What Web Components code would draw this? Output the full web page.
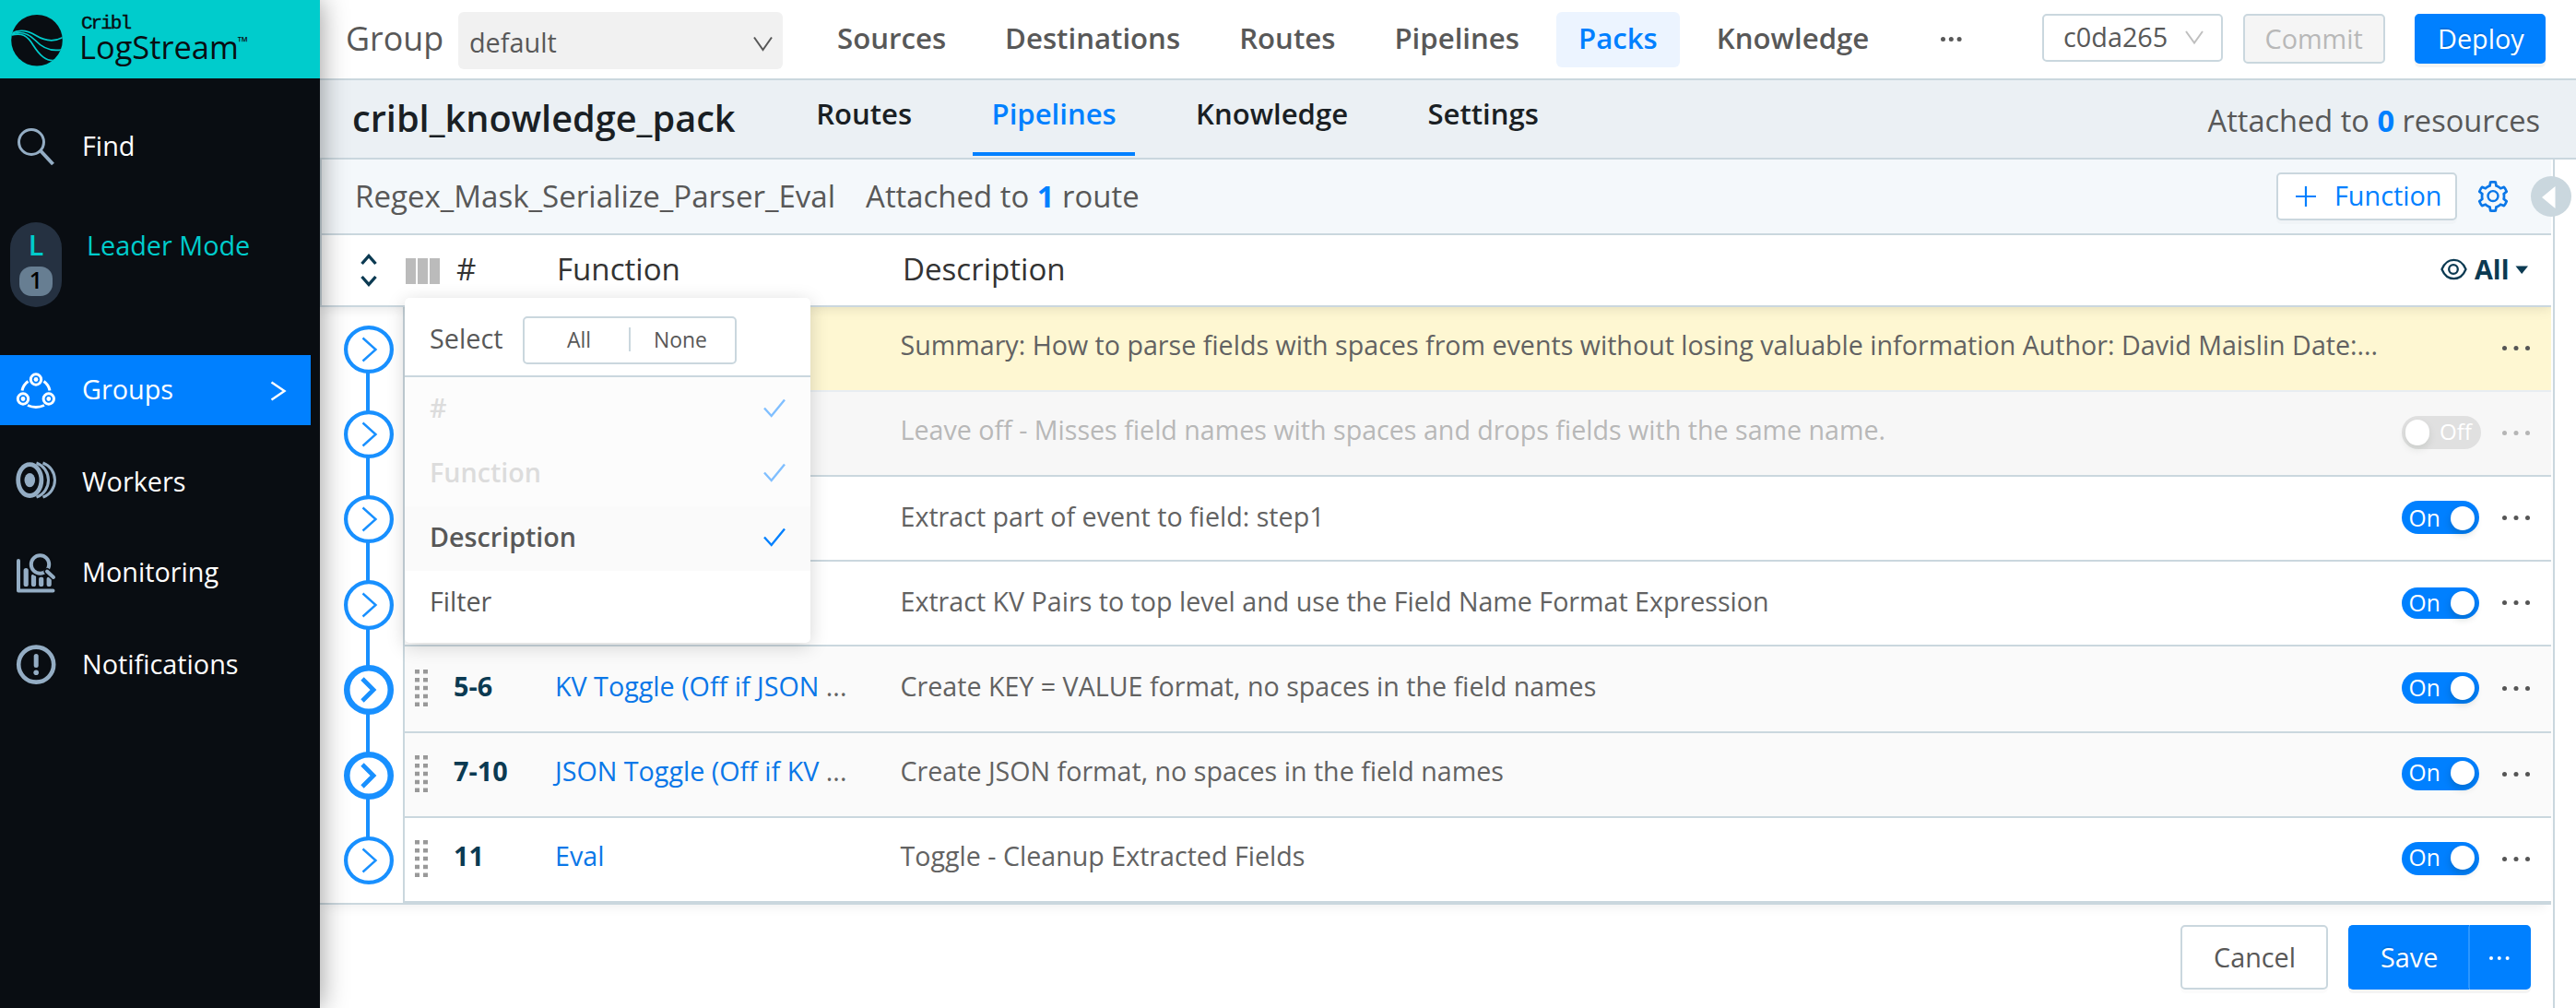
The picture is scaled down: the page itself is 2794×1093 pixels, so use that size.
<!DOCTYPE html>
<html lang="en">
<head>
<meta charset="utf-8">
<title>Cribl LogStream</title>
<style>
html,body{margin:0;padding:0;height:1093px;overflow:hidden;background:#fff}
body{font-family:"Open Sans","Noto Sans",sans-serif;color:#585858}
</style>
</head>
<body>
<log-app></log-app>
<script>
const define = (name, render) => customElements.define(name, class extends HTMLElement {
  connectedCallback() {
    if (this.shadowRoot) return;
    const root = this.attachShadow({ mode: 'open' });
    const tpl = document.createElement('template');
    tpl.innerHTML = '<style>*{box-sizing:border-box}svg{display:block;flex:none}</style>' + render(this).trim();
    root.append(tpl.content.cloneNode(true));
  }
});

/* One line of text; --s is the font size and --b the baseline below the row's top edge. */
define('ui-label', () => `<style>:host{display:block;flex:none;white-space:pre;line-height:40px;font-size:calc(var(--s,28.8)*1px);margin-top:calc(var(--b)*1px - 20px - .388em)}
::slotted(b){color:#0080ff;font-weight:700}</style><slot></slot>`);

define('ui-dots', e => {
  const gap = +e.getAttribute('gap') || 12.5, r = +e.getAttribute('r') || 2.5;
  const w = gap * 2 + r * 2;
  return `<style>:host{display:block;flex:none}</style>
<svg width="${w}" height="${r * 2}" fill="currentColor">${[0, 1, 2].map(i => `<circle cx="${r + i * gap}" cy="${r}" r="${r}"/>`).join('')}</svg>`;
});

define('ui-button', () => `
<style>:host{box-sizing:border-box;display:flex;flex:none;align-items:flex-start;border:2px solid #cad7de;border-radius:5px;background:#fff;box-shadow:0 4px 0 rgba(0,0,0,.016)}
:host([primary]){background:#0080ff;border-color:#0080ff;color:#fff;box-shadow:0 4px 0 rgba(0,0,0,.045);text-shadow:0 -2px 0 rgba(0,0,0,.12)}
:host([disabled]){background:#f5f5f5;color:#b8b8b8;box-shadow:none}
:host([plain]){box-shadow:none}</style><slot></slot>`);

define('nav-item', () => `
<style>:host{display:flex;flex:none;width:337px;height:76px;color:#fff}
:host([active]){background:#0080ff}
.icon{width:89px;flex:none}</style><div class="icon"><slot name="icon"></slot></div><slot></slot><slot name="end"></slot>`);

define('side-bar', () => `
<style>
:host{display:flex;flex-direction:column;width:347px;flex:none;height:1093px;background:#090d12;box-shadow:0 0 28px rgba(0,0,0,.42);position:relative;z-index:5}
.logo{height:85px;background:#00cccc;display:flex;color:#090d12;padding-left:12px;flex:none}
.words{padding-left:9px;display:flex;flex-direction:column}
.cribl{font:400 21px/20px "Liberation Mono",monospace;letter-spacing:-2px;-webkit-text-stroke:.4px #090d12;padding:16px 0 0 10px;height:34px}
.name{display:flex}
.leader{display:flex;height:93px;margin-top:45px;padding-left:11px;color:#00cccc}
.pill{width:56px;height:92px;border-radius:28px;background:#253141;display:flex;flex-direction:column;align-items:center}
.num{width:36px;height:32px;border-radius:13px;background:#677e92;color:#000;display:flex;justify-content:center;margin-top:auto;margin-bottom:12px}
</style>
<div class="logo">
 <svg width="57" height="85" viewBox="12 0 57 85"><clipPath id="c"><circle cx="40" cy="43.7" r="27.8"/></clipPath><circle cx="40" cy="43.7" r="27.8" fill="#090d12"/>
 <g clip-path="url(#c)" fill="none" stroke="#00cccc" stroke-width="1.7"><path d="M11 37C20 31.5 30 33 39 38.5C48 44 58 47 70 39.5"/><path d="M11 37.8C22 33 30 35.5 38 43.5C47 53 56 56.5 68 53.5"/><path d="M11 38.5C24 34.5 30 39 36 49C43 60 50 67 60 65.5"/></g></svg>
 <div class="words"><div class="cribl">Cribl</div>
 <div class="name"><ui-label style="--s:34.4;--b:30;margin-left:8px">LogStream</ui-label><ui-label style="--s:15;--b:17;font-weight:600;margin-left:-1px">™</ui-label></div></div>
</div>
<nav-item style="margin-top:35px"><svg slot="icon" width="80" height="76" viewBox="0 120 80 76" fill="none" stroke="#94adc4" stroke-width="3"><circle cx="34" cy="154" r="13.5"/><path d="M44 163.5L57.5 178" stroke-width="4"/></svg><ui-label style="--b:49">Find</ui-label></nav-item>
<div class="leader"><div class="pill"><ui-label style="--s:30.5;--b:36;font-weight:600">L</ui-label><div class="num"><ui-label style="--s:25;--b:24;font-weight:600">1</ui-label></div></div><ui-label style="--b:36;margin-left:27px">Leader Mode</ui-label></div>
<nav-item active style="margin-top:51px"><svg slot="icon" width="80" height="76" viewBox="0 385 80 76" fill="none" stroke="#fff" stroke-width="3"><g><circle cx="39" cy="411.5" r="5.7"/><circle cx="25" cy="432.5" r="5.7"/><circle cx="52.8" cy="432.5" r="5.7"/><path d="M24 423.5A16 16 0 0 1 30.5 413.5M47.5 413.5A16 16 0 0 1 54 423.5M30 439.5Q39 443.5 48 439.5"/></g><g fill="#fff" stroke="none"><circle cx="39" cy="411.5" r="2.4"/><circle cx="25" cy="432.5" r="2.4"/><circle cx="52.8" cy="432.5" r="2.4"/></g></svg><ui-label style="--b:48;width:204px">Groups</ui-label><svg slot="end" width="20" height="76" viewBox="293 385 20 76" fill="none" stroke="#fff" stroke-width="2.4"><path d="M294.5 414.5L308.5 424L294.5 433.5"/></svg></nav-item>
<nav-item style="margin-top:23px"><svg slot="icon" width="80" height="76" viewBox="0 484 80 76" fill="none" stroke="#94adc4"><ellipse cx="32.3" cy="520.6" rx="12.6" ry="16.9" stroke-width="4.8"/><ellipse cx="32.3" cy="520.6" rx="5.8" ry="7.7" fill="#94adc4" stroke="none"/><path d="M39.5 502C48 505 52.5 513 52.5 520.6S48 536 39.5 539.2M46.5 502C55 505 59.5 513 59.5 520.6S55 536 46.5 539.2" stroke-width="3"/></svg><ui-label style="--b:49">Workers</ui-label></nav-item>
<nav-item style="margin-top:23px"><svg slot="icon" width="80" height="76" viewBox="0 583 80 76" fill="none" stroke="#94adc4" stroke-width="4" stroke-linecap="round" stroke-linejoin="round"><path d="M20 608V640.5H57.5"/><path d="M28.2 618.5V633.5M36.5 625V633.5M44.7 628V633.5M53.2 628V633.5" stroke-width="5.2"/><circle cx="43.5" cy="612" r="13.5" fill="#090d12" stroke="none"/><circle cx="43.5" cy="612" r="9.7" fill="#090d12"/><path d="M51 619.5L58 626" stroke="#090d12" stroke-width="7"/><path d="M51 619.5L58 626"/></svg><ui-label style="--b:48">Monitoring</ui-label></nav-item>
<nav-item style="margin-top:22px"><svg slot="icon" width="80" height="76" viewBox="0 681 80 76" fill="none" stroke="#94adc4" stroke-width="4.6"><circle cx="39.2" cy="720.6" r="19"/><path d="M39.2 711.5V721.5" stroke-width="5" stroke-linecap="round"/><circle cx="39.2" cy="729.2" r="2.8" fill="#94adc4" stroke="none"/></svg><ui-label style="--b:50">Notifications</ui-label></nav-item>`);

define('nav-tab', () => `
<style>:host{display:flex;height:60px;padding:0 24px;border-radius:6px;font-weight:600;--s:31.2;--b:40}
:host([active]){background:#ecf4ff;color:#0080ff}</style><ui-label><slot></slot></ui-label>`);

define('top-bar', () => `
<style>:host{display:flex;align-items:flex-start;height:87px;flex:none;border-bottom:2px solid #cad7de;background:#fff;padding:0 33px 0 28px}
.sel{width:352px;height:62px;margin-top:13px;border-radius:6px;background:#f1f1f1;display:flex;justify-content:space-between;padding:0 11px}
nav{display:flex;gap:16px;margin:13px 0 0 35px}</style>
<ui-label style="--s:35.8;--b:55;width:122px">Group</ui-label>
<div class="sel"><ui-label style="--b:44;padding-left:1px">default</ui-label><svg width="21" height="62" viewBox="817.5 13 21 62" fill="none" stroke="#585858" stroke-width="2"><path d="M818.5 40.5L828 54L837.5 40.5"/></svg></div>
<nav><nav-tab>Sources</nav-tab><nav-tab>Destinations</nav-tab><nav-tab>Routes</nav-tab><nav-tab>Pipelines</nav-tab><nav-tab active>Packs</nav-tab><nav-tab>Knowledge</nav-tab></nav>
<ui-dots gap="8.8" r="2.5" style="margin:39.5px 87px 0 auto"></ui-dots>
<ui-button plain style="width:196px;height:52px;margin-top:15px"><ui-label style="--b:34;margin-left:21px;width:132px">c0da265</ui-label><svg width="21" height="48" viewBox="2370 17 21 48" fill="none" stroke="#bfbfbf" stroke-width="2"><path d="M2371 34L2380 46.5L2389 34"/></svg></ui-button>
<ui-button disabled style="width:154px;height:54px;margin:15px 0 0 22px"><ui-label style="--b:36;margin-left:21.5px">Commit</ui-label></ui-button>
<ui-button primary style="width:142px;height:54px;margin:15px 0 0 32px"><ui-label style="--b:36;margin-left:23px">Deploy</ui-label></ui-button>`);

define('pack-tab', () => `
<style>:host{display:flex;height:82px;padding:0 20.7px;font-weight:600;color:#1a1f24;--s:31.1;--b:48}
:host([active]){color:#0080ff;border-bottom:4px solid #0080ff}</style><ui-label><slot></slot></ui-label>`);

define('pack-bar', () => `
<style>:host{display:flex;align-items:flex-start;height:86px;flex:none;border-bottom:2px solid #cad7de;background:#ebf0f4;padding:0 39px 0 35px}
nav{display:flex;gap:45px}</style>
<ui-label style="--s:39.7;--b:56;width:482.5px;font-weight:600;color:#1a1f24">cribl_knowledge_pack</ui-label>
<nav><pack-tab>Routes</pack-tab><pack-tab active>Pipelines</pack-tab><pack-tab>Knowledge</pack-tab><pack-tab>Settings</pack-tab></nav>
<ui-label style="--s:32.6;--b:56.6;margin-left:auto">Attached to <b>0</b> resources</ui-label>`);

define('pipeline-bar', () => `
<style>:host{box-sizing:border-box;display:flex;align-items:flex-start;height:82px;flex:none;border-bottom:2px solid #cad7de;border-left:2px solid #cad7de;background:#f4f8fb;padding:0 47px 0 36px;color:#585858}
.fn{color:#0080ff}</style>
<ui-label style="--s:33.1;--b:52.6">Regex_Mask_Serialize_Parser_Eval</ui-label>
<ui-label style="--s:32.9;--b:52.6;margin-left:33px">Attached to <b>1</b> route</ui-label>
<ui-button class="fn" style="width:196px;height:52px;margin:14px 22px 0 auto"><svg width="61" height="48" viewBox="2471 189 61 48" stroke="#0080ff" stroke-width="2.2"><path d="M2490 213H2512M2501 202V224"/></svg><ui-label style="--b:34">Function</ui-label></ui-button>
<svg width="34" height="34" viewBox="64 64 896 896" fill="#0a77e8" style="margin:23px -1px 0 0"><path d="M924.8 625.7l-65.5-56c3.1-19 4.7-38.4 4.7-57.8s-1.6-38.8-4.7-57.8l65.5-56a32.03 32.03 0 0 0 9.3-35.2l-.9-2.6a443.74 443.74 0 0 0-79.7-137.9l-1.8-2.1a32.12 32.12 0 0 0-35.1-9.5l-81.3 28.9c-30-24.6-63.5-44-99.7-57.6l-15.7-85a32.05 32.05 0 0 0-25.8-25.7l-2.7-.5c-52.1-9.4-106.9-9.4-159 0l-2.7.5a32.05 32.05 0 0 0-25.8 25.7l-15.8 85.4a351.86 351.86 0 0 0-99 57.4l-81.9-29.1a32 32 0 0 0-35.1 9.5l-1.8 2.1a446.02 446.02 0 0 0-79.7 137.9l-.9 2.6c-4.5 12.5-.8 26.5 9.3 35.2l66.3 56.6c-3.1 18.8-4.6 38-4.6 57.1 0 19.2 1.5 38.4 4.6 57.1L99 625.5a32.03 32.03 0 0 0-9.3 35.2l.9 2.6c18.1 50.4 44.9 96.9 79.7 137.9l1.8 2.1a32.12 32.12 0 0 0 35.1 9.5l81.9-29.1c29.8 24.5 63.1 43.9 99 57.4l15.8 85.4a32.05 32.05 0 0 0 25.8 25.7l2.7.5a449.4 449.4 0 0 0 159 0l2.7-.5a32.05 32.05 0 0 0 25.8-25.7l15.7-85a350 350 0 0 0 99.7-57.6l81.3 28.9a32 32 0 0 0 35.1-9.5l1.8-2.1c34.8-41.1 61.6-87.5 79.7-137.9l.9-2.6c4.5-12.3.8-26.3-9.3-35zM788.3 465.9c2.5 15.1 3.8 30.6 3.8 46.1s-1.3 31-3.8 46.1l-6.6 40.1 74.7 63.9a370.03 370.03 0 0 1-42.6 73.6L721 702.8l-31.4 25.8c-23.9 19.6-50.5 35-79.3 45.8l-38.1 14.3-17.9 97a377.5 377.5 0 0 1-85 0l-17.9-97.2-37.8-14.5c-28.5-10.8-55-26.2-78.7-45.7l-31.4-25.9-93.4 33.2c-17-22.9-31.2-47.6-42.6-73.6l75.5-64.5-6.5-40c-2.4-14.9-3.7-30.3-3.7-45.5 0-15.3 1.2-30.6 3.7-45.5l6.5-40-75.5-64.5c11.3-26.1 25.6-50.7 42.6-73.6l93.4 33.2 31.4-25.9c23.7-19.5 50.2-34.9 78.7-45.7l37.9-14.3 17.9-97.2c28.1-3.2 56.8-3.2 85 0l17.9 97 38.1 14.3c28.7 10.8 55.4 26.2 79.3 45.8l31.4 25.8 92.8-32.9c17 22.9 31.2 47.6 42.6 73.6L781.8 426l6.5 39.9zM512 326c-97.2 0-176 78.8-176 176s78.8 176 176 176 176-78.8 176-176-78.8-176-176-176zm79.2 255.2A111.6 111.6 0 0 1 512 614c-29.9 0-58-11.7-79.2-32.8A111.6 111.6 0 0 1 400 502c0-29.9 11.7-58 32.8-79.2C454 401.6 482.1 390 512 390c29.9 0 58 11.6 79.2 32.8A111.6 111.6 0 0 1 624 502c0 29.9-11.7 58-32.8 79.2z"/></svg>`);

define('table-head', () => `
<style>:host{box-sizing:border-box;display:flex;align-items:flex-start;height:78px;flex:none;border-bottom:2px solid #cad7de;border-left:2px solid #cad7de;box-shadow:0 0 14px rgba(0,0,0,.13);position:relative;z-index:1;clip-path:inset(0 0 -20px 0);padding-right:24px;color:#333}
.all{color:#0b3a52;font-weight:700;margin-left:auto;display:flex}
ui-label{--s:33.1;--b:50.2}</style>
<svg width="91" height="76" viewBox="349 255 91 76" fill="none" stroke="#0b3a52" stroke-width="3.4"><path d="M392.5 286L400 277.5L407.5 286M392.5 300L400 308.5L407.5 300"/></svg>
<svg width="55" height="76" viewBox="440 255 55 76" fill="#bbb"><path d="M440 280h11v28h-11zM453 280h11v28h-11zM466 280h11v28h-11z"/></svg>
<ui-label style="width:109px">#</ui-label><ui-label style="width:375px">Function</ui-label><ui-label>Description</ui-label>
<div class="all"><svg width="37" height="76" viewBox="2647 255 37 76" fill="none" stroke="#0b3a52" stroke-width="2.3"><path d="M2648.5 292C2654 278.5 2669 278.5 2674.5 292C2669 305.5 2654 305.5 2648.5 292Z"/><circle cx="2661" cy="292" r="4.8"/></svg><ui-label style="--s:28.8;--b:48;width:44px">All</ui-label><svg width="15" height="76" viewBox="2728 255 15 76" fill="#0b3a52"><path d="M2728.5 288.5H2742L2735.2 297Z"/></svg></div>`);

define('toggle-switch', e => {
  const off = e.hasAttribute('off');
  return `<style>:host{display:flex;flex:none;align-items:flex-start;width:${off ? 86 : 84}px;height:calc(var(--th,36)*1px);border-radius:18px;background:${off ? '#e0e0e0' : '#0080ff'};color:#fff;--s:24.6}
i{display:block;width:26px;height:${off ? 28 : 26}px;border-radius:14px;background:#fff;box-shadow:0 4px 8px rgba(0,35,11,${off ? .1 : .2});margin-top:calc(var(--k,4)*1px)}</style>` +
  (off ? `<i style="margin-left:4px"></i><ui-label style="--s:24.1;margin-left:11px;--b:26.2">Off</ui-label>`
       : `<ui-label style="margin-left:7.5px;width:45.5px;--b:calc(var(--tb) + .6)">On</ui-label><i></i>`);
});

/* A pipeline step: rail node, drag handle, number, function link, description, switch, menu. */
define('step-row', e => {
  const a = n => e.getAttribute(n), kind = a('kind') || '', h = +a('h') || 92, cy = +a('cy') || 46, b = a('b') || 52;
  const group = kind === 'group', ry = +a('ry') || 26, tt = +a('tt') || 26;
  const sw = group ? 6.5 : 4.2;
  return `<style>
:host{display:flex;height:${h}px;flex:none}
.rail{width:90px;flex:none}
.cells{flex:1;display:flex;align-items:flex-start;border-left:2px solid #cad7de;min-width:0}
.body{flex:1;display:flex;align-items:flex-start;height:${h}px;border-bottom:2px solid ${kind === 'comment' ? '#e8edf2' : '#cad7de'};background:${{ comment: '#fef7d2', off: '#f7f7f7', group: '#fafafa' }[kind] || '#fff'};color:${kind === 'off' ? '#b8b8b8' : '#626262'};padding-right:23px}
.num{color:#0b3a52;font-weight:700}
.fn{width:374.5px;flex:none}
.fn span{color:#0a77e8}
.end{margin-left:auto;display:flex;align-items:flex-start}
</style>
<svg class="rail" width="90" height="${h}" fill="none" stroke="#1890ff">
${e.hasAttribute('first') ? '' : `<path d="M52 0V${cy - ry + 1}" stroke-width="4"/>`}${e.hasAttribute('last') ? '' : `<path d="M52 ${cy + ry - 1}V${h}" stroke-width="4"/>`}
<ellipse cx="53" cy="${cy}" rx="${27 - sw / 2}" ry="${ry - sw / 2}" stroke-width="${sw}"/>
<path d="${group ? `M46 ${cy - 12}L58 ${cy}L46 ${cy + 12}` : `M46.5 ${cy - 12.5}L60.5 ${cy}L46.5 ${cy + 12.5}`}" stroke-width="${group ? 4.8 : 2.4}"/></svg>
<div class="cells"><div class="body">
<svg width="53" height="${h - 2}" fill="#999">${a('n') ? [0, 1, 2, 3, 4].map(i => `<path d="M11 ${cy - 22 + i * 8.9}h5v4.5h-5zM20 ${cy - 22 + i * 8.9}h5v4.5h-5z"/>`).join('') : ''}</svg>
<ui-label class="num" style="--b:${b};width:110px">${a('n') || ''}</ui-label>
<ui-label class="fn" style="--b:${b};--s:28.7"><span>${a('fn') || ''}</span>${a('cut') || ''}</ui-label>
<ui-label style="--b:${b};--s:28.63"><slot></slot></ui-label>
<div class="end">${kind === 'comment' ? '' : `<toggle-switch ${kind === 'off' ? 'off' : ''} style="margin-top:${tt}px;margin-right:${kind === 'off' ? 23 : 25}px;--tb:${b - tt};--th:${a('th') || 36};--k:${a('k') || 4}"></toggle-switch>`}
<ui-dots style="margin-top:${(+a('dy') || 44) - 2.5}px;color:${kind === 'off' ? '#b5b5b5' : '#555'}"></ui-dots></div>
</div></div>`;
});

define('pick-item', e => `
<style>:host{box-sizing:border-box;display:flex;align-items:flex-start;justify-content:space-between;height:70px;flex:none;padding:0 27px;color:#585858;--b:44}
:host([on]){font-weight:600;background:#fafafa}:host([on][disabled]){background:#fcfcfc;color:#dcdcdc}</style>
<ui-label style="--s:28.7"><slot></slot></ui-label>${e.hasAttribute('on') ? `<svg width="24" height="70" fill="none" stroke="${e.hasAttribute('disabled') ? '#80bfff' : '#0080ff'}" stroke-width="2.4"><path d="M1 33.5L8.7 42L23 24.5"/></svg>` : ''}`);

define('column-menu', () => `
<style>:host{display:block;position:absolute;left:439px;top:323px;width:440px;height:374px;background:#fff;border-radius:5px;box-shadow:0 4px 20px rgba(0,0,0,.17);z-index:4}
.head{display:flex;align-items:flex-start;height:86px;border-bottom:2px solid #cad7de;padding-left:27px}
.seg{display:flex;width:232px;height:52px;border:2px solid #cad7de;border-radius:5px;margin-top:20px;--s:22.9;--b:32.600}
.seg div{width:115px;display:flex;justify-content:center}
.seg i{width:2px;height:26px;background:#cad7de;margin-top:10px}</style>
<div class="head"><ui-label style="--b:55;width:101px">Select</ui-label><div class="seg"><div style="padding-left:5px"><ui-label>All</ui-label></div><i></i><div style="padding-right:5px"><ui-label>None</ui-label></div></div></div>
<pick-item on disabled>#</pick-item><pick-item on disabled>Function</pick-item><pick-item on>Description</pick-item><pick-item>Filter</pick-item>`);

define('action-bar', () => `
<style>:host{display:flex;align-items:flex-start;justify-content:flex-end;padding:22px 22px 0 0;gap:22px;flex:1}
.split{display:flex}</style>
<ui-button style="width:160px;height:70px"><ui-label style="--b:44;margin-left:34px">Cancel</ui-label></ui-button>
<div class="split"><ui-button primary style="width:132px;height:70px;border-radius:5px 0 0 5px;border-right-color:#2b96ff"><ui-label style="--b:44;margin-left:33px">Save</ui-label></ui-button><ui-button primary style="width:66px;height:70px;border-radius:0 5px 5px 0"><ui-dots gap="8.8" r="2" style="margin:32px 0 0 19px"></ui-dots></ui-button></div>`);

define('log-app', () => `
<style>:host{display:flex;width:2794px;height:1093px;position:relative}
main{flex:1;display:flex;flex-direction:column;min-width:0}
top-bar,pack-bar{box-sizing:border-box}
.work{flex:1;display:flex;min-height:0}
.content{width:2420px;flex:none;display:flex;flex-direction:column}
.rows{display:flex;flex-direction:column;flex:none;border-bottom:2px solid #cad7de;box-shadow:0 8px 12px -6px rgba(0,0,0,.07)}
.drawer{width:25px;margin-left:2px;border-left:2px solid #cad7de;position:relative}
.drawer svg{position:absolute;left:-26px;top:18px}</style>
<side-bar></side-bar>
<main><top-bar></top-bar><pack-bar></pack-bar>
<div class="work"><div class="content"><pipeline-bar></pipeline-bar><table-head></table-head>
<div class="rows">
<step-row kind="comment" first>Summary: How to parse fields with spaces from events without losing valuable information Author: David Maislin Date:...</step-row>
<step-row kind="off">Leave off - Misses field names with spaces and drops fields with the same name.</step-row>
<step-row b="54" k="6">Extract part of event to field: step1</step-row>
<step-row b="54" cy="47" ry="27" tt="28" th="34">Extract KV Pairs to top level and use the Field Name Format Expression</step-row>
<step-row kind="group" h="94" cy="47" ry="27" b="54" tt="28" th="34" dy="45" n="5-6" fn="KV Toggle (Off if JSON " cut="...">Create KEY = VALUE format, no spaces in the field names</step-row>
<step-row kind="group" n="7-10" fn="JSON Toggle (Off if KV " cut="...">Create JSON format, no spaces in the field names</step-row>
<step-row last n="11" fn="Eval">Toggle - Cleanup Extracted Fields</step-row>
</div><action-bar></action-bar></div>
<div class="drawer"><svg width="44" height="44"><circle cx="22" cy="22" r="22" fill="#cad7de"/><path d="M12 23L26.5 11V35Z" fill="#fff"/></svg></div></div></main>
<column-menu></column-menu>`);
</script>
</body>
</html>
